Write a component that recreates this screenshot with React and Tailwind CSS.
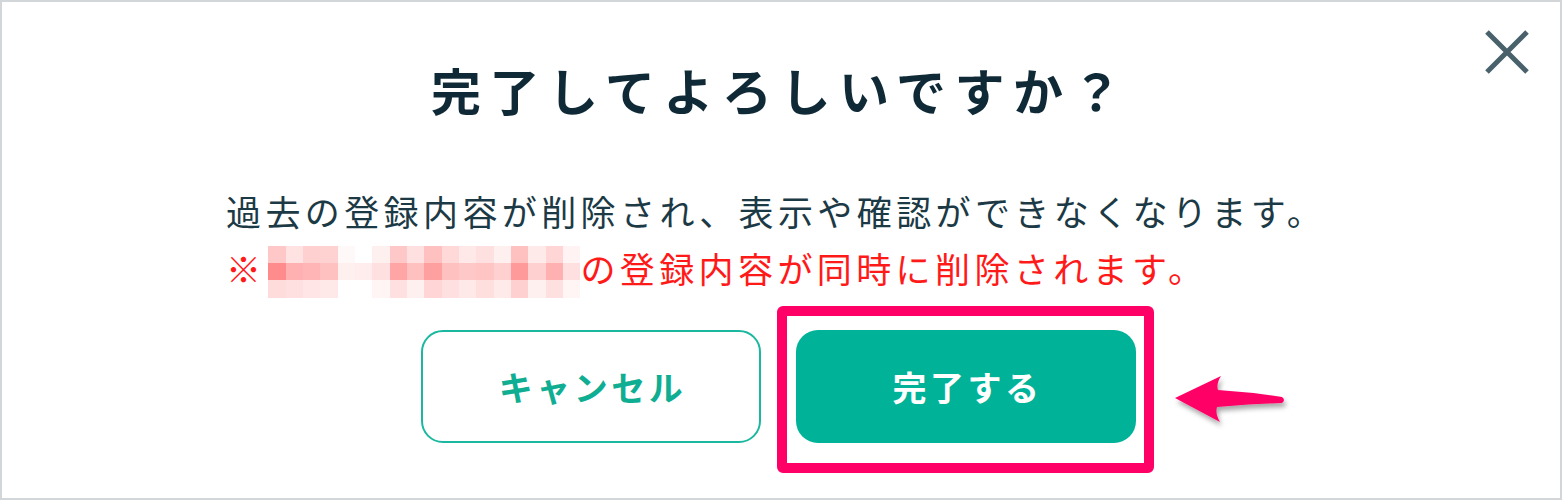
import React from 'react'

// pixelated (mosaic) cells covering the hidden name, 3 rows x 18 columns
const mosaic = [
  ['bg-[#ffc8c8]', 'bg-[#ffe3e3]', 'bg-[#ffd0d0]', 'bg-[#ffd2d2]', 'bg-[#fff8f8]', 'bg-[#ffffff]', 'bg-[#fff0f0]', 'bg-[#ffc8c8]', 'bg-[#ffe0e0]', 'bg-[#ffc0c0]', 'bg-[#ffd8d8]', 'bg-[#ffe8e8]', 'bg-[#ffe0e0]', 'bg-[#fff0f0]', 'bg-[#ffc0c0]', 'bg-[#ffeaea]', 'bg-[#ffd5d5]', 'bg-[#fff3f3]'],
  ['bg-[#ff8c8c]', 'bg-[#ffb0b0]', 'bg-[#ffb5b5]', 'bg-[#ffc0c0]', 'bg-[#fff0f0]', 'bg-[#ffecec]', 'bg-[#ffe0e0]', 'bg-[#ffa5a5]', 'bg-[#ffc0c0]', 'bg-[#ffa0a0]', 'bg-[#ffc0c0]', 'bg-[#ffc8c8]', 'bg-[#ffc5c5]', 'bg-[#ffd0d0]', 'bg-[#ff9a9a]', 'bg-[#ffd0d0]', 'bg-[#ffb0b0]', 'bg-[#ffe0e0]'],
  ['bg-[#ffdcdc]', 'bg-[#ffe0e0]', 'bg-[#ffe5e5]', 'bg-[#ffe8e8]', 'bg-[#ffffff]', 'bg-[#ffffff]', 'bg-[#fff5f5]', 'bg-[#ffe0e0]', 'bg-[#fff0f0]', 'bg-[#ffd5d5]', 'bg-[#ffe0e0]', 'bg-[#ffe8e8]', 'bg-[#ffdede]', 'bg-[#ffeaea]', 'bg-[#ffd0d0]', 'bg-[#fff0f0]', 'bg-[#ffe0e0]', 'bg-[#fff5f5]'],
]

const font = { fontFamily: '"Noto Sans CJK JP", "Noto Sans", sans-serif' }

const App = () => {
  return (
    <div
      className="relative w-[1562px] h-[500px] bg-white border-2 border-[#d2d6d9] flex flex-col items-start overflow-hidden"
      style={font}
    >
      {/* close button */}
      <button className="absolute left-[1480px] top-[25px] w-[50px] h-[50px]">
        <svg viewBox="0 0 50 50" className="w-[50px] h-[50px]">
          <path d="M5 5 L45 45 M45 5 L5 45" stroke="#48616b" strokeWidth="5" fill="none" />
        </svg>
      </button>

      <h1 className="ml-[429px] mt-[56px] text-[50px] leading-[62px] font-bold tracking-[8.5px] text-[#0f2a36]">
        完了してよろしいですか？
      </h1>

      <div className="ml-[224px] mt-[62px] text-[35px] leading-[57px] tracking-[4.4px]">
        <p className="text-[#1c3a45]">過去の登録内容が削除され、表示や確認ができなくなります。</p>
        <div className="flex items-center h-[57px] text-[#ff1a1a]">
          <span>※</span>
          <div className="ml-[3px] mt-[8px] w-[312px] h-[52px] grid grid-cols-18 grid-rows-3">
            {mosaic.flat().map((c, i) => (
              <div key={i} className={c}></div>
            ))}
          </div>
          <span>の登録内容が同時に削除されます。</span>
        </div>
      </div>

      <div className="ml-[419px] mt-[34px] flex gap-[35px]">
        <button className="w-[340px] h-[113px] rounded-[22px] border-2 border-[#1bb89f] bg-white text-[#0fae93] text-[34px] font-bold tracking-[3.5px] pl-[3px]">
          キャンセル
        </button>
        <button className="w-[340px] h-[113px] rounded-[22px] bg-[#00b398] text-white text-[34px] font-bold tracking-[3.5px] pl-[3px]">
          完了する
        </button>
      </div>

      {/* annotation: highlight box around the confirm button */}
      <div className="absolute left-[775px] top-[304px] w-[377px] h-[167px] border-[10px] border-[#ff0066] rounded-[6px]"></div>

      {/* annotation: arrow */}
      <svg viewBox="0 0 120 60" className="absolute left-[1168px] top-[368px] w-[120px] h-[60px] overflow-visible">
        <defs>
          <filter id="sh" x="-20%" y="-30%" width="150%" height="180%">
            <feDropShadow dx="2" dy="4" stdDeviation="2.5" floodColor="#000" floodOpacity="0.35" />
          </filter>
        </defs>
        <path
          d="M5 28 L51 6 Q46 14 48 20 Q80 22 112 27 Q116 30 112 33 Q80 34 47 37 Q45 44 50 52 Z"
          fill="#ff0066"
          filter="url(#sh)"
        />
      </svg>
    </div>
  )
}

export default App
